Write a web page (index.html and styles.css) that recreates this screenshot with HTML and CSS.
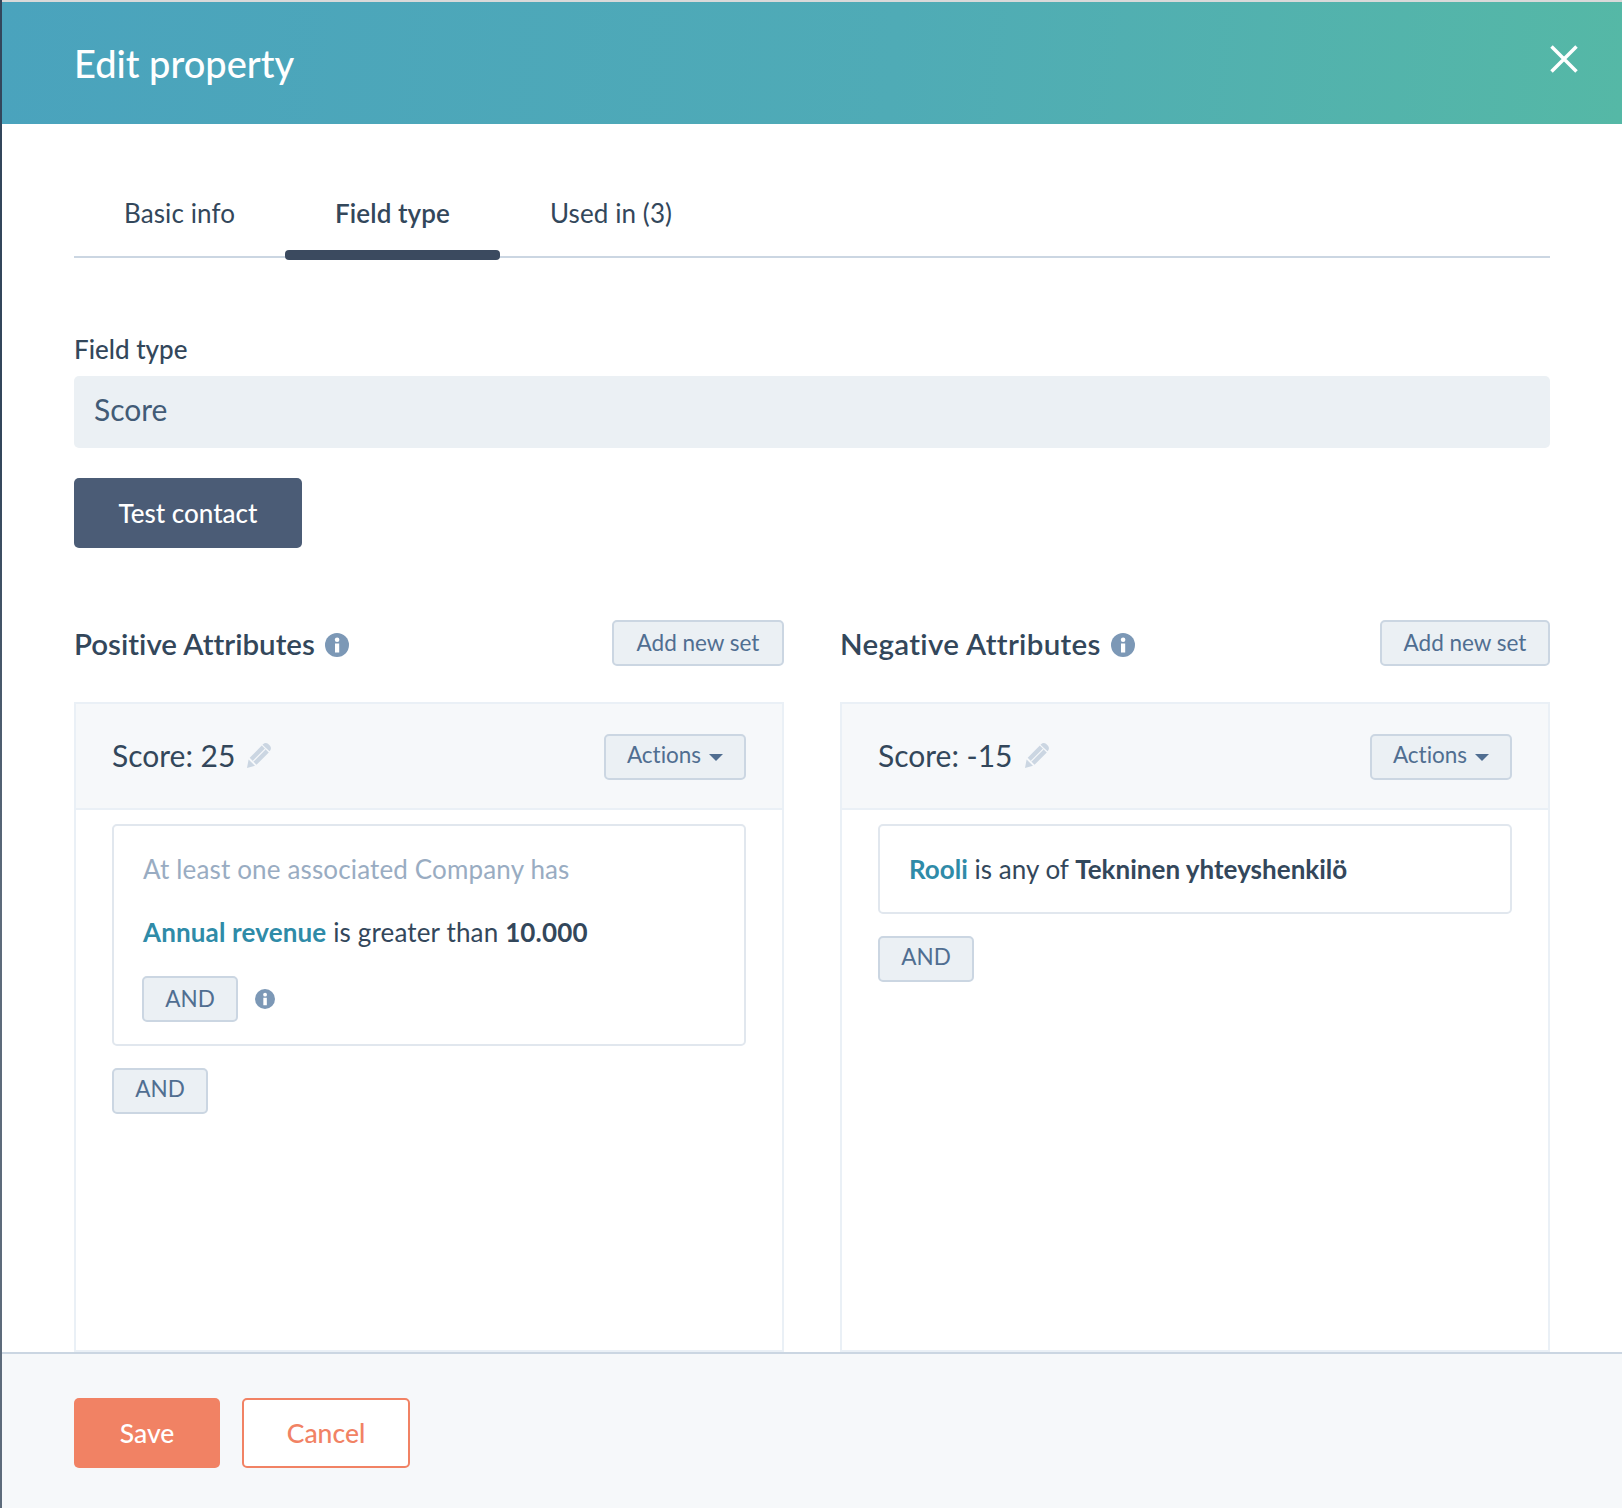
FILE: index.html
```html
<!DOCTYPE html>
<html lang="en">
<head>
<meta charset="utf-8">
<title>Edit property</title>
<link rel="stylesheet" href="styles.css">
</head>
<body>
<div class="modal">
  <header class="modal-head">
    <h1 class="modal-title">Edit property</h1>
    <svg class="close-icon" viewBox="0 0 28 28" aria-hidden="true"><path d="M1.500 1.500 26.500 26.500M26.500 1.500 1.500 26.500"/></svg>
  </header>
  <main class="modal-body">
    <nav class="tabs">
      <span class="tab">Basic info</span>
      <span class="tab tab-active">Field type</span>
      <span class="tab">Used in (3)</span>
    </nav>
    <div class="field-label">Field type</div>
    <div class="field-value">Score</div>
    <button class="btn-dark">Test contact</button>
    <div class="columns">
      <section class="column">
        <div class="column-head">
          <h2 class="column-title">Positive Attributes
            <svg class="info info-lg" viewBox="0 0 24 24" aria-hidden="true"><circle cx="12" cy="12" r="12"/><rect class="info-i" x="10" y="10.5" width="4.2" height="9"/><circle class="info-i" cx="12.1" cy="6.800" r="2.300"/></svg>
          </h2>
          <button class="btn-light btn-add">Add new set</button>
        </div>
        <div class="panel">
          <div class="panel-head">
            <div class="score">Score: 25
              <svg class="pencil" viewBox="0 0 24 25" aria-hidden="true"><path d="M0 25 1.600 16.500 8 22.800ZM2.700 14.700 14.800 2.600 21.800 9.600 9.500 21.800ZM16 1.300C17.500-.2 19.500-.3 21 .8L23 2.800C24.300 4.500 24.200 6.200 23 7.700L22.500 8.300 15.500 1.800Z"/><path class="pencil-line" d="M6 18.300 18.200 6.100"/></svg>
            </div>
            <button class="btn-light btn-actions">Actions <span class="caret"></span></button>
          </div>
          <div class="panel-body">
            <div class="rule">
              <p class="rule-note">At least one associated Company has</p>
              <p class="rule-line"><b class="prop">Annual revenue</b> is greater than <b>10.000</b></p>
              <div class="rule-actions">
                <button class="btn-light btn-and">AND</button>
                <svg class="info info-sm" viewBox="0 0 24 24" aria-hidden="true"><circle cx="12" cy="12" r="12"/><rect class="info-i" x="10" y="10.5" width="4.2" height="9"/><circle class="info-i" cx="12.1" cy="6.800" r="2.300"/></svg>
              </div>
            </div>
            <button class="btn-light btn-and">AND</button>
          </div>
        </div>
      </section>
      <section class="column">
        <div class="column-head">
          <h2 class="column-title column-title-wide">Negative Attributes
            <svg class="info info-lg" viewBox="0 0 24 24" aria-hidden="true"><circle cx="12" cy="12" r="12"/><rect class="info-i" x="10" y="10.5" width="4.2" height="9"/><circle class="info-i" cx="12.1" cy="6.800" r="2.300"/></svg>
          </h2>
          <button class="btn-light btn-add">Add new set</button>
        </div>
        <div class="panel">
          <div class="panel-head">
            <div class="score">Score: -15
              <svg class="pencil" viewBox="0 0 24 25" aria-hidden="true"><path d="M0 25 1.600 16.500 8 22.800ZM2.700 14.700 14.800 2.600 21.800 9.600 9.500 21.800ZM16 1.300C17.500-.2 19.500-.3 21 .8L23 2.800C24.300 4.500 24.200 6.200 23 7.700L22.500 8.300 15.500 1.800Z"/><path class="pencil-line" d="M6 18.300 18.200 6.100"/></svg>
            </div>
            <button class="btn-light btn-actions">Actions <span class="caret"></span></button>
          </div>
          <div class="panel-body">
            <div class="rule rule-single">
              <p class="rule-line"><b class="prop prop-plain">Rooli</b> is any of <b>Tekninen yhteyshenkilö</b></p>
            </div>
            <button class="btn-light btn-and">AND</button>
          </div>
        </div>
      </section>
    </div>
  </main>
  <footer class="modal-foot">
    <button class="btn-save">Save</button>
    <button class="btn-cancel">Cancel</button>
  </footer>
</div>
</body>
</html>
```
FILE: styles.css
```css
* { box-sizing: border-box; }
html, body { margin: 0; height: 100%; }
body {
  background: linear-gradient(to bottom, #33465b 0%, #33465b 30%, #5d6b7b 60%, #5d6b7b 100%);
  padding-left: 2px;
  font-family: Lato, "Noto Sans", sans-serif;
  color: #33475b;
  overflow: hidden;
  font-variant-ligatures: none;
}
p, h1, h2 { margin: 0; font-weight: inherit; }
button { font-family: inherit; cursor: pointer; font-variant-ligatures: none; }

.modal {
  height: 1508px;
  display: flex;
  flex-direction: column;
  background: #fff;
  border-top: 2px solid #d9d9d9;
}
.modal-head {
  flex: none;
  height: 122px;
  padding: 0 44px 0 72px;
  display: flex;
  align-items: center;
  justify-content: space-between;
  background: linear-gradient(95deg, #4aa3bd 0%, #4fabb6 55%, #55b8a6 100%);
}
.modal-title { font-size: 38px; font-weight: 500; color: #fff; }
.close-icon { width: 28px; height: 28px; margin-top: -8px; }
.close-icon path { fill: none; stroke: #fff; stroke-width: 3.500; }

.modal-body {
  flex: 1;
  min-height: 0;
  overflow: hidden;
  padding: 0 72px;
}
.tabs {
  display: flex;
  height: 134px;
  align-items: flex-end;
  border-bottom: 2px solid #cbd6e2;
  margin-bottom: 75px;
}
.tab {
  padding: 0 50px 27px;
  font-size: 26px;
  letter-spacing: .1px;
  line-height: 32px;
  position: relative;
}
.tab-active { font-weight: 600; }
.tab-active::after {
  content: "";
  position: absolute;
  left: 0; right: 0; bottom: -4px;
  height: 10px;
  border-radius: 4px;
  background: #3b4a5f;
}
.field-label { font-size: 26px; line-height: 32px; font-weight: 500; margin-bottom: 11px; }
.field-value {
  height: 72px;
  background: #ebf0f4;
  border-radius: 5px;
  padding: 0 20px;
  font-size: 30px;
  line-height: 66px;
  color: #425b76;
  margin-bottom: 30px;
}
.btn-dark {
  display: block;
  width: 228px;
  height: 70px;
  border: 0;
  border-radius: 5px;
  background: #4b5c76;
  color: #fff;
  font-size: 26px;
  font-weight: 500;
  margin-bottom: 72px;
}
.columns {
  display: grid;
  grid-template-columns: 710px 710px;
  column-gap: 56px;
}
.column-head {
  height: 46px;
  margin-bottom: 36px;
  display: flex;
  align-items: center;
  justify-content: space-between;
}
.column-title {
  font-size: 29.500px;
  font-weight: 600;
  display: flex;
  align-items: center;
  gap: 10px;
}
.column-title-wide { letter-spacing: .33px; }
.info circle, .info { fill: #7c98b6; }
.info .info-i { fill: #fff; }
.info-lg { width: 24px; height: 24px; margin-top: 3px; }
.info-sm { width: 20px; height: 20px; }

.btn-light {
  background: #ebf0f4;
  border: 2px solid #cbd6e2;
  border-radius: 5px;
  color: #506e91;
  font-size: 22.500px;
  height: 46px;
  padding: 0 0 2px;
  font-weight: 400;
}
.btn-add { width: 172px; }
.column:last-child .btn-add { width: 170px; }
.btn-actions { width: 142px; display: flex; align-items: center; justify-content: center; gap: 8px; padding-bottom: 6px; }
.btn-and { width: 96px; display: block; padding-bottom: 5px; }
.rule-actions .btn-and { padding-bottom: 1px; }
.caret {
  width: 0; height: 0;
  border-left: 7px solid transparent;
  border-right: 7px solid transparent;
  border-top: 7px solid #506e91;
  margin-top: 7px;
}
.panel {
  height: 650px;
  border: 2px solid #eaf0f6;
}
.panel-head {
  height: 106px;
  background: #f6f8fa;
  border-bottom: 2px solid #eaf0f6;
  padding: 2px 36px 0;
  display: flex;
  align-items: center;
  justify-content: space-between;
}
.score { font-size: 30px; display: flex; align-items: center; gap: 12px; margin-top: -4px; }
.pencil { width: 24px; height: 25px; fill: #cbd6e2; }
.pencil-line { fill: none; stroke: #f6f8fa; stroke-width: 1.200; }
.panel-body { padding: 14px 36px 0; }
.rule {
  border: 2px solid #e1e7ee;
  border-radius: 5px;
  padding: 25px 29px 22px;
  margin-bottom: 22px;
  font-size: 26px;
  letter-spacing: .15px;
  line-height: 36px;
}
.rule-single { padding: 25px 29px 25px; margin-bottom: 22px; letter-spacing: .02px; }
.rule-note { color: #99acc2; margin-bottom: 27px; }
.rule-line b { font-weight: 700; }
.prop { color: #2f8ba8; }
.rule-actions { display: flex; align-items: center; gap: 17px; margin: 26px 0 0 -1px; letter-spacing: 0; }

.modal-foot {
  flex: none;
  height: 156px;
  border-top: 2px solid #cbd6e2;
  background: #f6f8fa;
  padding: 44px 72px 0;
  display: flex;
  align-items: flex-start;
  gap: 22px;
}
.btn-save, .btn-cancel {
  height: 70px;
  border-radius: 5px;
  font-size: 26.500px;
  font-weight: 500;
}
.btn-save { width: 146px; border: 0; background: #f18264; color: #fff; }
.btn-cancel { width: 168px; border: 2px solid #f18264; background: #fff; color: #f18264; }
```
